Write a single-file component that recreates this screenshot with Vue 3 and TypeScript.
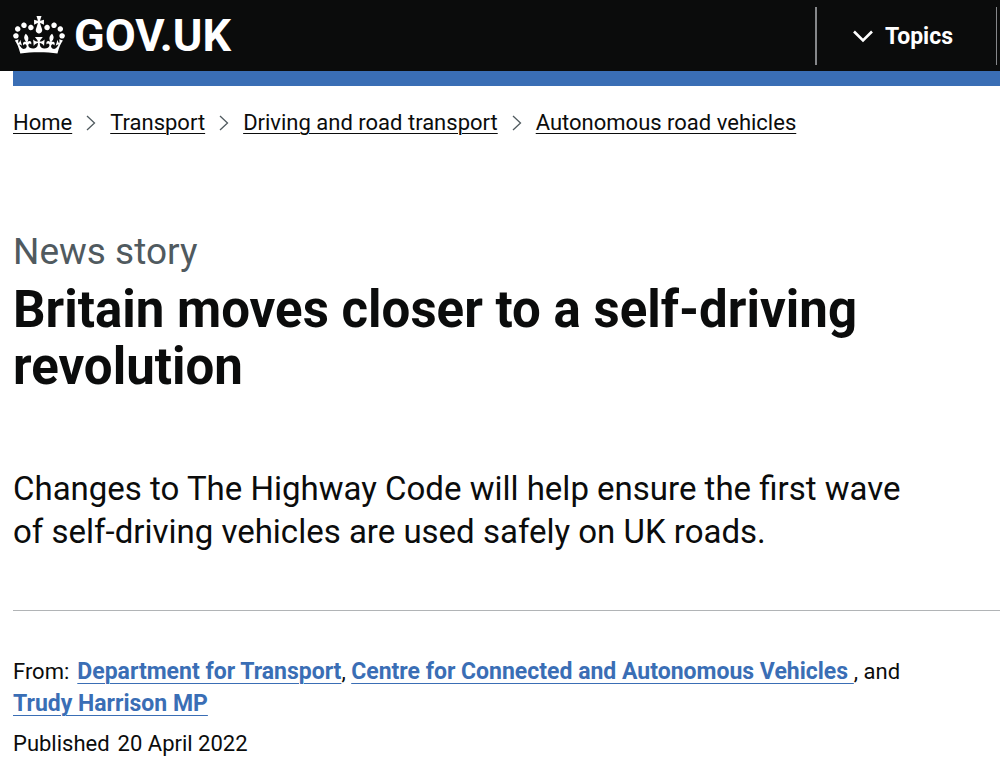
<script setup lang="ts">
import { ref } from 'vue'

interface Crumb {
  label: string
  href: string
}

const crumbs: Crumb[] = [
  { label: 'Home', href: '#home' },
  { label: 'Transport', href: '#transport' },
  { label: 'Driving and road transport', href: '#driving' },
  { label: 'Autonomous road vehicles', href: '#vehicles' },
]

const menuOpen = ref(false)
</script>

<template>
  <div class="page">
    <header class="header">
      <a class="logo" href="#home">
        <svg class="crown" viewBox="0 0 132 97" aria-hidden="true">
          <path
            fill="currentColor"
            d="M25 30.2c3.5 1.5 7.7-.2 9.1-3.7 1.5-3.6-.2-7.8-3.9-9.2-3.6-1.4-7.6.3-9.1 3.9-1.4 3.5.3 7.5 3.9 9zM9 39.5c3.6 1.5 7.8-.2 9.2-3.7 1.5-3.6-.2-7.8-3.9-9.1-3.6-1.5-7.6.2-9.1 3.8-1.4 3.5.3 7.5 3.8 9zM4.4 57.2c3.5 1.5 7.7-.2 9.1-3.8 1.5-3.6-.2-7.7-3.9-9.1-3.5-1.5-7.6.3-9.1 3.8-1.4 3.5.3 7.6 3.9 9.1zm38.3-21.4c3.5 1.5 7.7-.2 9.1-3.8 1.5-3.6-.2-7.7-3.9-9.1-3.6-1.5-7.6.3-9.1 3.8-1.3 3.6.4 7.7 3.9 9.1zm64.4-5.6c-3.6 1.5-7.8-.2-9.1-3.7-1.5-3.6.2-7.8 3.8-9.2 3.6-1.4 7.7.3 9.2 3.9 1.3 3.5-.4 7.5-3.9 9zm15.9 9.3c-3.6 1.5-7.7-.2-9.1-3.7-1.5-3.6.2-7.8 3.7-9.1 3.6-1.5 7.7.2 9.2 3.8 1.5 3.5-.3 7.5-3.8 9zm4.7 17.7c-3.6 1.5-7.8-.2-9.2-3.8-1.5-3.6.2-7.7 3.9-9.1 3.6-1.5 7.7.3 9.2 3.8 1.3 3.5-.4 7.6-3.9 9.1zM89.3 35.8c-3.6 1.5-7.8-.2-9.2-3.8-1.4-3.6.2-7.7 3.9-9.1 3.6-1.5 7.7.3 9.2 3.8 1.4 3.6-.3 7.7-3.9 9.1zM69.7 17.7l8.9 4.7V9.3l-8.9 2.8c-.2-.3-.5-.6-.9-.9L72.4 0H59.6l3.5 11.2c-.3.3-.6.5-.9.9l-8.8-2.8v13.1l8.8-4.7c.3.3.6.7.9.9l-5 15.4v.1c-.2.8-.4 1.6-.4 2.4 0 4.1 3.1 7.5 7 8.1h.2c.3 0 .7.1 1 .1.4 0 .7 0 1-.1h.2c4-.6 7.1-4.1 7.1-8.1 0-.8-.1-1.7-.4-2.4V34l-5.1-15.4c.4-.2.7-.6 1-.9zM66 92.8c16.9 0 32.8 1.1 47.1 3.2 4-16.9 8.9-26.7 14-33.5l-9.6-3.4c1 4.9 1.1 7.2 0 10.2-1.5-1.4-3-4.3-4.2-8.7L108.6 76c2.8-2 5-3.2 7.5-3.3-4.4 9.4-10 11.9-13.6 11.2-4.3-.8-6.3-4.6-5.6-7.9 1-4.7 5.7-5.9 8-.5 4.3-8.7-3-11.4-7.6-8.8 7.1-7.2 7.9-13.5 2.1-21.1-8 6.1-8.1 12.3-4.5 20.8-4.7-5.4-12.1-2.5-9.5 6.2 3.4-5.2 7.9-2 7.2 3.1-.6 4.3-6.4 7.8-13.5 7.2-10.3-.9-10.9-8-11.2-13.8 2.5-.5 7.1 1.8 11 7.3L80.2 60c-4.1 4.4-8 5.3-12.3 5.4 1.4-4.4 8-11.6 8-11.6H55.5s6.4 7.2 7.9 11.6c-4.2-.1-8-1-12.3-5.4l1.4 16.4c3.9-5.5 8.5-7.7 10.9-7.3-.3 5.8-.9 12.8-11.1 13.8-7.2.6-12.9-2.9-13.5-7.2-.7-5 3.8-8.3 7.1-3.1 2.7-8.7-4.6-11.6-9.4-6.2 3.7-8.5 3.6-14.7-4.6-20.8-5.8 7.6-5 13.9 2.2 21.1-4.7-2.6-11.9.1-7.7 8.8 2.3-5.5 7.1-4.2 8.1.5.7 3.3-1.3 7.1-5.7 7.9-3.5.7-9-1.8-13.5-11.2 2.5.1 4.7 1.3 7.5 3.3l-4.7-15.4c-1.2 4.4-2.7 7.2-4.3 8.7-1.1-3-.9-5.3 0-10.2l-9.5 3.4c5 6.9 9.9 16.7 14 33.5 14.8-2.1 30.8-3.2 47.7-3.2z"
          />
        </svg>
        <span class="wordmark">GOV.UK</span>
      </a>
      <button class="topics" type="button" :aria-expanded="menuOpen" @click="menuOpen = !menuOpen">
        <svg class="chevron" viewBox="0 0 20 13" aria-hidden="true">
          <path d="M1 1.500 10 10.500l9-9" fill="none" stroke="currentColor" stroke-width="2.600" />
        </svg>
        <span>Topics</span>
      </button>
    </header>

    <div class="content">
      <div class="blue-bar"></div>

      <nav aria-label="Breadcrumb">
        <ol class="crumbs">
          <li v-for="(crumb, i) in crumbs" :key="crumb.href" class="crumb">
            <svg v-if="i > 0" class="separator" viewBox="0 0 10 16" aria-hidden="true">
              <path d="M1 1l7.500 7L1 15" fill="none" stroke="currentColor" stroke-width="1.300" />
            </svg>
            <a :href="crumb.href">{{ crumb.label }}</a>
          </li>
        </ol>
      </nav>

      <main>
        <p class="caption">News story</p>
        <h1 class="title">Britain moves closer to a self-driving revolution</h1>
        <p class="lead">
          Changes to The Highway Code will help ensure the first wave of self-driving vehicles are
          used safely on UK roads.
        </p>
        <dl class="meta">
          <div class="meta-row">
            <dt>From:</dt>
            <dd>
              <a href="#dft">Department for Transport</a>,
              <a href="#ccav">Centre for Connected and Autonomous Vehicles&nbsp;</a>, and
              <a href="#harrison">Trudy Harrison MP</a>
            </dd>
          </div>
          <div class="meta-row">
            <dt>Published</dt>
            <dd>20 April 2022</dd>
          </div>
        </dl>
      </main>
    </div>
  </div>
</template>

<style>
body {
  margin: 0;
  background: #fff;
}
</style>

<style scoped>
.page {
  color: #0b0c0c;
  font-family: Roboto, sans-serif;
}

.header {
  display: flex;
  justify-content: space-between;
  align-items: center;
  box-sizing: border-box;
  height: 71px;
  padding: 1px 3px 0 13px;
  background: #0b0c0c;
  color: #fff;
}

.logo {
  display: flex;
  align-items: center;
  gap: 9px;
  color: inherit;
  text-decoration: none;
}

.crown {
  width: 52px;
  height: 38px;
  margin-bottom: 2px;
}

.wordmark {
  font-size: 45px;
  font-weight: 700;
  line-height: 48px;
}

.topics {
  display: flex;
  align-items: center;
  gap: 12px;
  height: 58px;
  padding: 1px 43px 0 36px;
  border: solid #85878a;
  border-width: 0 1px 0 2px;
  background: transparent;
  color: inherit;
  font-family: inherit;
  font-size: 23px;
  font-weight: 700;
  cursor: pointer;
}

.chevron {
  width: 20px;
  height: 13px;
}

.content {
  padding-left: 13px;
}

.blue-bar {
  height: 15px;
  background: #3a6eb5;
}

.crumbs {
  display: flex;
  flex-wrap: wrap;
  margin: 0;
  padding: 21px 0 0;
  list-style: none;
  font-size: 22px;
  line-height: 32px;
}

.crumb {
  display: flex;
  align-items: center;
}

.crumb a {
  color: inherit;
  text-decoration-thickness: 1px;
  text-underline-offset: 3px;
}

.separator {
  width: 10px;
  height: 16px;
  margin: 0 14px;
  color: #505a5f;
}

.caption {
  margin: 88px 0 0;
  color: #505a5f;
  font-size: 37px;
  line-height: 50px;
}

.title {
  max-width: 900px;
  margin: 4px 0 0;
  font-size: 51px;
  font-weight: 700;
  line-height: 57px;
}

.lead {
  max-width: 920px;
  margin: 72px 0 0;
  font-size: 33px;
  line-height: 43px;
}

.meta {
  margin: 57px 0 0;
  padding: 45px 90px 0 0;
  border-top: 1px solid #b1b4b6;
  font-size: 22px;
  line-height: 32px;
}

.meta-row + .meta-row {
  margin-top: 8px;
}

.meta dt,
.meta dd {
  display: inline;
  margin: 0;
}

.meta dt {
  margin-right: 8px;
}

.meta a {
  color: #3a6eb5;
  font-size: 23px;
  font-weight: 700;
  text-decoration-thickness: 1px;
  text-underline-offset: 4px;
}
</style>
